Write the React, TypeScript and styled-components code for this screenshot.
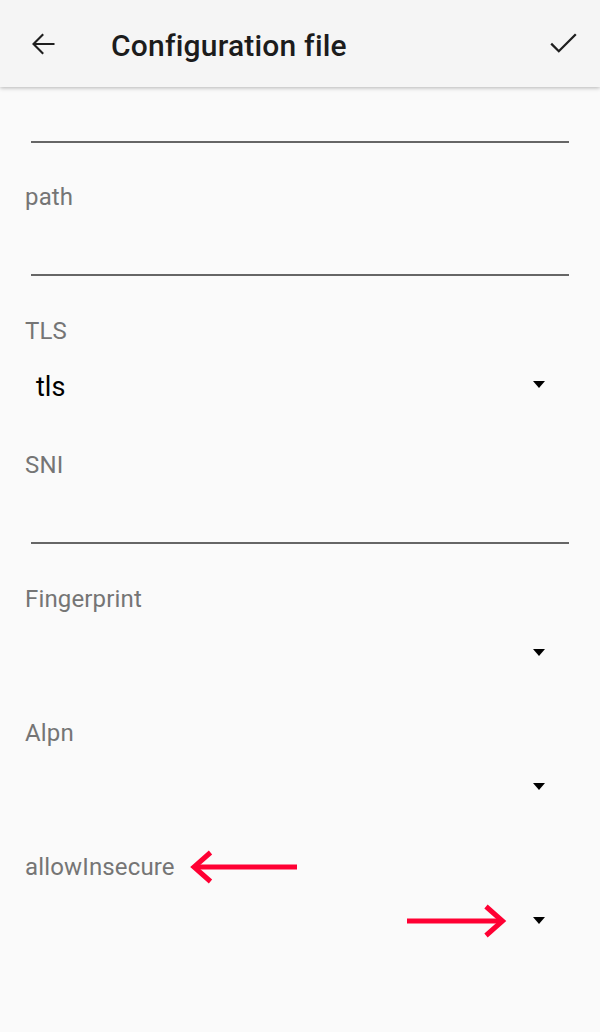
import React from "react";
import styled, { createGlobalStyle } from "styled-components";

const Global = createGlobalStyle`
  html, body { margin: 0; padding: 0; background: #fafafa; }
  body { font-family: Roboto, "Noto Sans", "Liberation Sans", sans-serif; }
  #root { min-height: 1032px; background: #fafafa; }
`;

const Page = styled.div`
  width: 600px;
  min-height: 1032px;
  background: #fafafa;
  display: flex;
  flex-direction: column;
`;

const Toolbar = styled.header`
  position: relative;
  z-index: 1;
  height: 87px;
  box-sizing: border-box;
  background: #f5f5f5;
  box-shadow: 0 1px 4px rgba(0, 0, 0, 0.28);
  display: flex;
  align-items: center;
  padding: 0 23px 0 31px;
`;

const IconButton = styled.span`
  display: flex;
  align-items: center;
  justify-content: center;
  color: #1f1f1f;
`;

const Title = styled.h1`
  flex: 1;
  margin: 5px 0 0 56px;
  font-size: 30px;
  font-weight: 500;
  letter-spacing: 0.2px;
  line-height: 36px;
  color: #1c1c1c;
`;

const Content = styled.main`
  display: flex;
  flex-direction: column;
  padding: 0 24px 0 24px;
`;

const LeadLine = styled.div`
  height: 56px;
  box-sizing: border-box;
  margin: 0 7px;
  border-bottom: 2px solid #666666;
`;

const FieldList = styled.div`
  display: flex;
  flex-direction: column;
  padding-top: 40px;
`;

const Field = styled.section`
  height: 134px;
  display: flex;
  flex-direction: column;
`;

const LabelRow = styled.div`
  display: flex;
  align-items: center;
  height: 28px;
`;

const Label = styled.span`
  font-size: 24px;
  line-height: 28px;
  letter-spacing: 0.15px;
  color: #757575;
  padding-left: 1px;
`;

const EditLine = styled.div`
  height: 65px;
  box-sizing: border-box;
  margin: 0 7px;
  border-bottom: 2px solid #666666;
`;

const SpinnerRow = styled.div`
  display: flex;
  align-items: center;
  padding-top: 26px;
  height: 32px;
`;

const SpinnerValue = styled.span`
  flex: 1;
  padding-left: 12px;
  font-size: 27px;
  line-height: 32px;
  color: #000000;
`;

const Caret = styled.span`
  width: 0;
  height: 0;
  border-left: 6.5px solid transparent;
  border-right: 6.5px solid transparent;
  border-top: 7px solid #000000;
  margin: 0 31px 5px 0;
`;

const Annotation = styled.svg<{ $gap: number }>`
  display: block;
  flex: none;
  margin-left: ${(p) => p.$gap}px;
`;

const RightAnnotation = styled.svg`
  display: block;
  flex: none;
  margin: 0 26px 4px 0;
`;

const BackIcon = () => (
  <svg width="24" height="24" viewBox="0 0 24 24" fill="none">
    <path d="M23.5 12H2.5M12.2 2.3L2.5 12l9.7 9.7" stroke="currentColor" strokeWidth="2.1" />
  </svg>
);

const CheckIcon = () => (
  <svg width="27" height="21" viewBox="0 0 27 21" fill="none">
    <path d="M1.2 10.6l7.6 7.6L25.8 1.2" stroke="currentColor" strokeWidth="2.3" />
  </svg>
);

const LeftArrow = () => (
  <Annotation $gap={12} width="112" height="36" viewBox="0 0 112 36" fill="none">
    <path d="M7 18H110" stroke="#ff0033" strokeWidth="5" />
    <path d="M23.5 3.5L7 18l16.5 14.5" stroke="#ff0033" strokeWidth="5" strokeLinejoin="miter" />
  </Annotation>
);

const RightArrow = () => (
  <RightAnnotation width="102" height="36" viewBox="0 0 102 36" fill="none">
    <path d="M2 18H97" stroke="#ff0033" strokeWidth="5" />
    <path d="M81 3.5L97.5 18 81 32.5" stroke="#ff0033" strokeWidth="5" strokeLinejoin="miter" />
  </RightAnnotation>
);

type FieldDef =
  | { kind: "edit"; label: string }
  | { kind: "spinner"; label: string; value?: string; marked?: boolean };

const fields: FieldDef[] = [
  { kind: "edit", label: "path" },
  { kind: "spinner", label: "TLS", value: "tls" },
  { kind: "edit", label: "SNI" },
  { kind: "spinner", label: "Fingerprint" },
  { kind: "spinner", label: "Alpn" },
  { kind: "spinner", label: "allowInsecure", marked: true },
];

export default function App() {
  return (
    <Page>
      <Global />
      <Toolbar>
        <IconButton>
          <BackIcon />
        </IconButton>
        <Title>Configuration file</Title>
        <IconButton>
          <CheckIcon />
        </IconButton>
      </Toolbar>
      <Content>
        <LeadLine />
        <FieldList>
          {fields.map((f) => (
            <Field key={f.label}>
              <LabelRow>
                <Label>{f.label}</Label>
                {f.kind === "spinner" && f.marked && <LeftArrow />}
              </LabelRow>
              {f.kind === "edit" ? (
                <EditLine />
              ) : (
                <SpinnerRow>
                  <SpinnerValue>{f.value ?? ""}</SpinnerValue>
                  {f.marked && <RightArrow />}
                  <Caret />
                </SpinnerRow>
              )}
            </Field>
          ))}
        </FieldList>
      </Content>
    </Page>
  );
}
